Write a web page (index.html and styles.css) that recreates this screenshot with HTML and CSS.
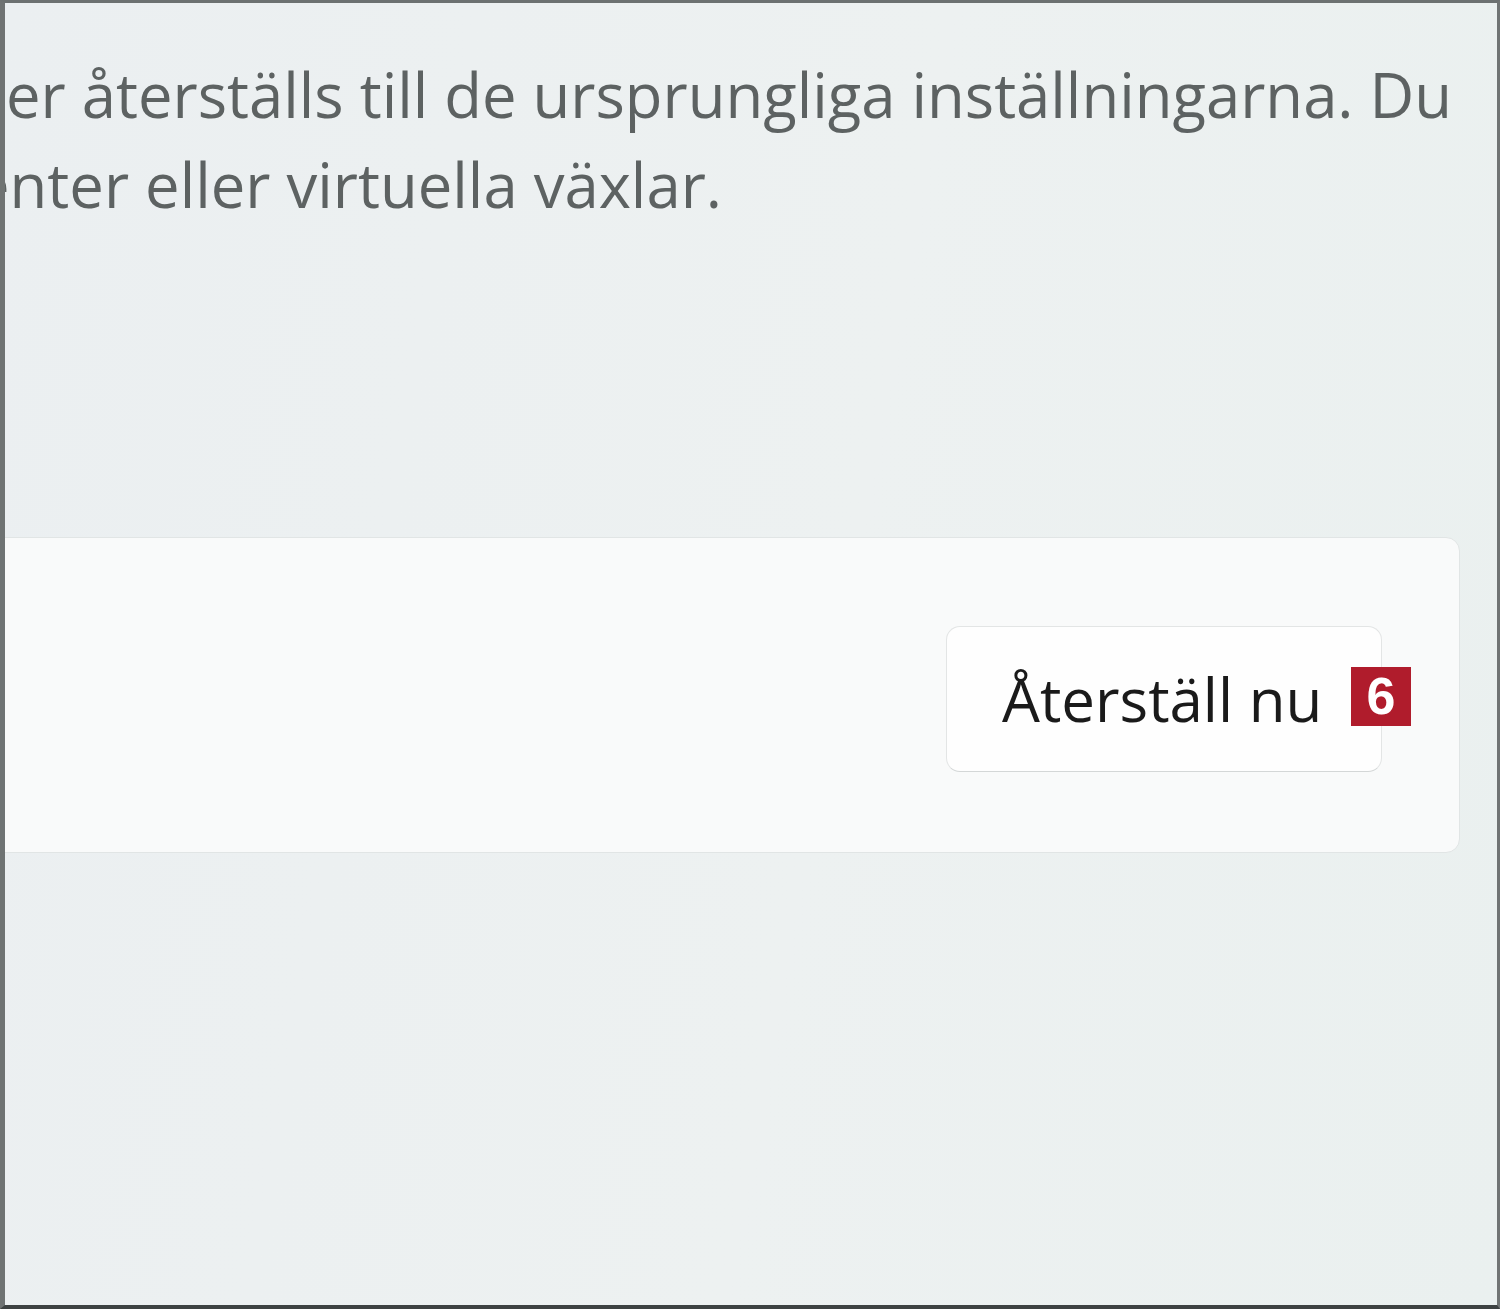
FILE: index.html
```html
<!DOCTYPE html>
<html lang="sv">
<head>
    <meta charset="UTF-8">
    <meta name="viewport" content="width=device-width, initial-scale=1.0">
    <title>Nätverksåterställning</title>
    <link rel="stylesheet" href="styles.css">
</head>
<body>

    <div class="frame">
        <div class="desc">
            <div class="line line-first"><span>nätverkskomponenter återställs till de ursprungliga inställningarna. Du</span></div>
            <div class="line line-second"><span>VPN-klienter eller virtuella växlar.</span></div>
        </div>

        <div class="card">
            <button type="button" class="reset-btn">
                Återställ nu
                <span class="badge">6</span>
            </button>
        </div>
    </div>

</body>
</html>
```

FILE: styles.css
```css
body {
    margin: 0;
    padding: 0;
    background-color: #ebf0f1;
    font-family: "Open Sans", "Noto Sans", sans-serif;
    overflow: hidden;
}

.frame {
    box-sizing: border-box;
    width: 1500px;
    height: 1309px;
    border-top: 3px solid #6c7171;
    border-left: 5px solid #6f7373;
    border-right: 3px solid #707474;
    border-bottom: 4px solid #3d4242;
    background: linear-gradient(100deg, #ebeff1 0%, #edf1f1 55%, #eaf0ef 100%);
    overflow: hidden;
}

.desc {
    padding-top: 46px;
    color: #5d6262;
    font-size: 61.6px;
    line-height: 90px;
    white-space: nowrap;
}

.line {
    display: flex;
    justify-content: flex-end;
    margin-left: -5px;
}

.line-first {
    width: 1452px;
}

.line-second {
    width: 722px;
}

.card {
    margin: 308px 37px 0 -40px;
    height: 314px;
    background-color: #f9fafa;
    border: 1px solid #e1e5e5;
    border-radius: 14px;
    display: flex;
    justify-content: flex-end;
    align-items: center;
    padding-right: 77px;
}

.reset-btn {
    position: relative;
    margin-top: 8px;
    width: 436px;
    height: 146px;
    background-color: #fefefe;
    border: 1px solid #e3e5e5;
    border-bottom-color: #d4d7d7;
    border-radius: 14px;
    font-family: "Open Sans", "Noto Sans", sans-serif;
    font-size: 60px;
    color: #1a1a1a;
    text-align: left;
    padding: 0 0 0 55px;
}

.badge {
    position: absolute;
    right: -30px;
    top: 40px;
    width: 60px;
    height: 59px;
    background-color: #b01c2c;
    color: #ffffff;
    font-family: "Liberation Sans", Arial, sans-serif;
    font-weight: bold;
    font-size: 52px;
    line-height: 59px;
    text-align: center;
}
```
